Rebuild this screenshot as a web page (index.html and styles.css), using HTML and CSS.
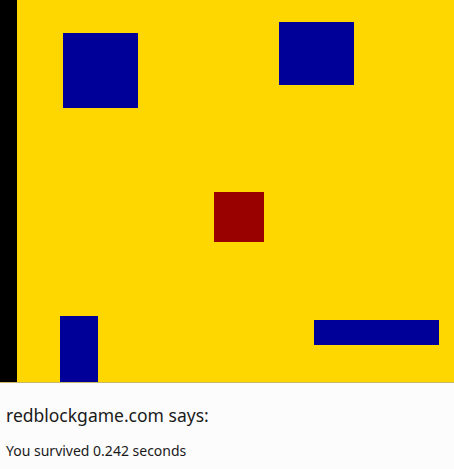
FILE: index.html
```html
<!DOCTYPE html>
<html>
<head>
<meta charset="utf-8">
<link rel="stylesheet" href="styles.css">
</head>
<body>
<div class="game">
  <div class="wall"></div>
  <div class="field">
    <div class="block blue b1"></div>
    <div class="block blue b2"></div>
    <div class="block red b3"></div>
    <div class="block blue b4"></div>
    <div class="block blue b5"></div>
  </div>
</div>
<div class="dialog">
  <div class="title">redblockgame.com says:</div>
  <div class="msg">You survived 0.242 seconds</div>
</div>
</body>
</html>
```
FILE: styles.css
```css
html, body { margin: 0; padding: 0; }
body { width: 454px; height: 469px; overflow: hidden; background: #fcfcfc; font-family: "Noto Sans", "Open Sans", sans-serif; }
.game { display: flex; height: 382px; border-bottom: 1px solid #c9b76a; }
.wall { width: 17px; background: #000; }
.field { flex: 1; position: relative; background: #ffd700; }
.block { position: absolute; }
.blue { background: #000099; }
.red { background: #990000; }
.b1 { left: 46px; top: 33px; width: 75px; height: 75px; }
.b2 { left: 262px; top: 22px; width: 75px; height: 63px; }
.b3 { left: 197px; top: 192px; width: 50px; height: 50px; }
.b4 { left: 43px; top: 316px; width: 38px; height: 66px; }
.b5 { left: 297px; top: 320px; width: 125px; height: 25px; }
.dialog { padding: 21px 6px 0; color: #1a1a1a; }
.title { font-size: 17.5px; line-height: 23px; }
.msg { font-size: 14px; line-height: 18px; margin-top: 15px; }
```
